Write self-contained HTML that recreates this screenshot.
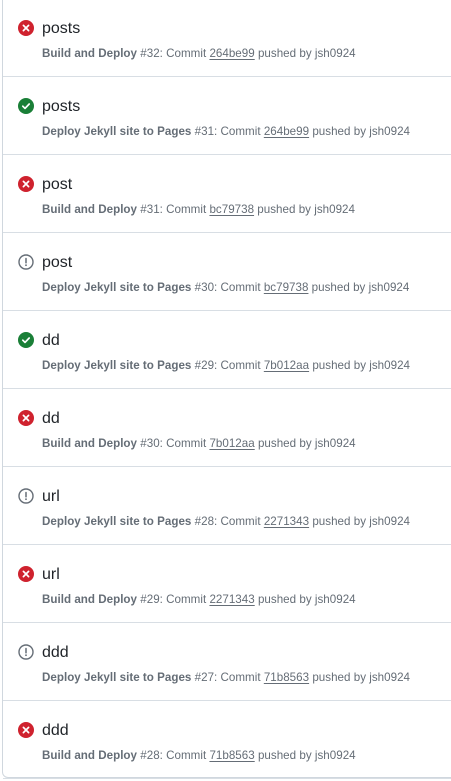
<!DOCTYPE html>
<html><head><style>
body{margin:0;background:#fff;width:451px;height:781px;overflow:hidden;font-family:"Liberation Sans",sans-serif;}
.box{position:absolute;left:2px;top:-8px;width:470px;height:786px;border:1px solid #d0d7de;border-radius:6px;box-sizing:border-box;}
.row{position:absolute;left:3px;width:460px;height:77px;border-bottom:1px solid #d8dee4;}
.row svg{position:absolute;left:15px;top:21px;}
.t{position:absolute;left:39px;top:21px;font-size:16px;color:#1f2328;}
.s{position:absolute;left:39px;top:48px;font-size:11.6px;color:#656d76;white-space:nowrap;letter-spacing:0.02px;}
.s b{font-weight:bold;}
.s u{text-decoration:underline;text-underline-offset:2px;}
</style></head><body>
<div class="box"></div>
<div id="c"></div>
<script>
var X='<svg width="16" height="16" viewBox="0 0 16 16"><circle cx="8" cy="8" r="8" fill="#cf222e"/><path d="M5.4 5.4l5.2 5.2M10.6 5.4l-5.2 5.2" stroke="#fff" stroke-width="1.7" stroke-linecap="round"/></svg>';
var V='<svg width="16" height="16" viewBox="0 0 16 16"><circle cx="8" cy="8" r="8" fill="#1a7f37"/><path d="M4.8 8.2l2.2 2.2 4.2-4.4" stroke="#fff" stroke-width="1.7" fill="none" stroke-linecap="round" stroke-linejoin="round"/></svg>';
var W='<svg width="16" height="16" viewBox="0 0 16 16"><circle cx="8" cy="8" r="7" fill="none" stroke="#656d76" stroke-width="1.4"/><path d="M8 4.5v4.2" stroke="#656d76" stroke-width="1.5" stroke-linecap="round"/><circle cx="8" cy="11.2" r="0.9" fill="#656d76"/></svg>';
var B='Build and Deploy',D='Deploy Jekyll site to Pages';
var r=[[X,'posts',B,32,'264be99'],[V,'posts',D,31,'264be99'],[X,'post',B,31,'bc79738'],[W,'post',D,30,'bc79738'],[V,'dd',D,29,'7b012aa'],[X,'dd',B,30,'7b012aa'],[W,'url',D,28,'2271343'],[X,'url',B,29,'2271343'],[W,'ddd',D,27,'71b8563'],[X,'ddd',B,28,'71b8563']];
var h='';
r.forEach(function(a,i){h+='<div class="row" style="top:'+(-1+78*i)+'px">'+a[0]+'<div class="t">'+a[1]+'</div><div class="s"><b>'+a[2]+'</b> #'+a[3]+': Commit <u>'+a[4]+'</u> pushed by jsh0924</div></div>';});
document.getElementById('c').innerHTML=h;
</script>
</body></html>
